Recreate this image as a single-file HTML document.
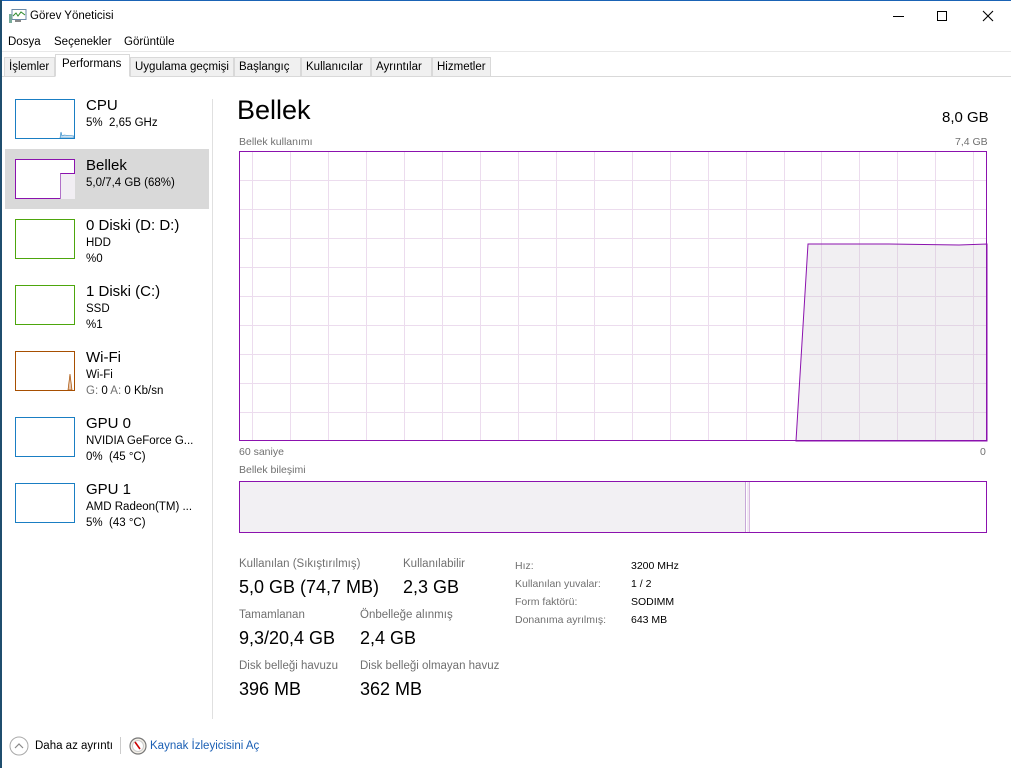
<!DOCTYPE html>
<html><head><meta charset="utf-8"><style>
*{margin:0;padding:0;box-sizing:border-box}
body{width:1011px;height:768px;background:#fff;font-family:"Segoe UI","Liberation Sans","DejaVu Sans",sans-serif;position:relative;overflow:hidden;color:#000}
.a{position:absolute;white-space:nowrap}
.s12{font-size:11.5px}
.g{color:#707070}
.tab{position:absolute;top:57px;height:20px;background:#f0f0f0;border:1px solid #d9d9d9;font-size:11.5px;padding:3px 0 0 4px;white-space:nowrap;overflow:hidden}
.thumb{position:absolute;left:15px;width:60px;height:40px;border:1px solid;background:#fff}
.t1{position:absolute;left:86px;font-size:15px;white-space:nowrap}
.t2{position:absolute;left:86px;font-size:11.5px;white-space:nowrap}
</style></head><body>
<div class="a" style="left:0;top:0;width:1011px;height:1px;background:#1a63b5"></div>
<div class="a" style="left:0;top:0;width:2px;height:768px;background:#1f4e6e"></div>
<svg class="a" style="left:9px;top:9px" width="18" height="14" viewBox="0 0 18 14"><rect x="3" y="0.5" width="14" height="10" fill="#fff" stroke="#6a8aa8"/><polyline points="4,7 7,4 9,7 12,3 16,6" fill="none" stroke="#2d8a2d"/><rect x="0" y="5" width="3" height="9" fill="#7a9"/><rect x="6" y="11" width="6" height="2" fill="#888"/></svg>
<div class="a s12" style="left:30px;top:10px">Görev Yöneticisi</div>
<div class="a" style="left:893px;top:16px;width:11px;height:1px;background:#000"></div>
<div class="a" style="left:937px;top:11px;width:10px;height:10px;border:1px solid #000"></div>
<svg class="a" style="left:982px;top:10px" width="12" height="12"><path d="M1 1L11 11M11 1L1 11" stroke="#000" stroke-width="1.1"/></svg>
<div class="a s12" style="left:8px;top:36px">Dosya</div>
<div class="a s12" style="left:54px;top:36px">Seçenekler</div>
<div class="a s12" style="left:124px;top:36px">Görüntüle</div>
<div class="a" style="left:2px;top:51px;width:1009px;height:1px;background:#e8e8e8"></div>
<div class="a" style="left:2px;top:76px;width:1009px;height:1px;background:#d9d9d9"></div>
<div class="tab" style="left:4px;width:51px">İşlemler</div>
<div class="tab" style="left:55px;top:54px;height:23px;width:75px;background:#fff;border-bottom-color:#fff;padding:3px 0 0 6px">Performans</div>
<div class="tab" style="left:130px;width:104px">Uygulama geçmişi</div>
<div class="tab" style="left:234px;width:67px">Başlangıç</div>
<div class="tab" style="left:301px;width:70px">Kullanıcılar</div>
<div class="tab" style="left:371px;width:61px">Ayrıntılar</div>
<div class="tab" style="left:432px;width:59px">Hizmetler</div>
<div class="a" style="left:212px;top:99px;width:1px;height:620px;background:#e0e0e0"></div>
<div class="a" style="left:5px;top:149px;width:204px;height:60px;background:#d9d9d9"></div>
<div class="thumb" style="top:99px;border-color:#1a7ec3"><svg width="58" height="38" style="position:absolute;left:0;top:0"><path d="M44 38L45 32L46 36L48 35L58 36L58 38Z" fill="#cfe3f2" stroke="#1a7ec3" stroke-width="0.6"/></svg></div>
<div class="t1" style="top:97px">CPU</div><div class="t2" style="top:117px">5%&nbsp; 2,65 GHz</div>
<div class="thumb" style="top:159px;border-color:#8b12ae"><div style="position:absolute;left:44px;top:13px;width:15px;height:26px;border-left:1px solid #b070c8;border-top:1px solid #8b12ae;background:#f1eef3"></div></div>
<div class="t1" style="top:157px">Bellek</div><div class="t2" style="top:177px">5,0/7,4 GB (68%)</div>
<div class="thumb" style="top:219px;border-color:#4da60c"></div>
<div class="t1" style="top:217px">0 Diski (D: D:)</div><div class="t2" style="top:237px">HDD</div><div class="t2" style="top:253px">%0</div>
<div class="thumb" style="top:285px;border-color:#4da60c"></div>
<div class="t1" style="top:283px">1 Diski (C:)</div><div class="t2" style="top:303px">SSD</div><div class="t2" style="top:319px">%1</div>
<div class="thumb" style="top:351px;border-color:#a74f01"><svg width="58" height="38" style="position:absolute;left:0;top:0"><path d="M52 38L54 22L56 38Z" fill="#e8c8b0" stroke="#a74f01" stroke-width="0.7"/></svg></div>
<div class="t1" style="top:349px">Wi-Fi</div><div class="t2" style="top:369px">Wi-Fi</div><div class="t2" style="top:385px"><span class="g">G:</span> 0 <span class="g">A:</span> 0 Kb/sn</div>
<div class="thumb" style="top:417px;border-color:#1a7ec3"></div>
<div class="t1" style="top:415px">GPU 0</div><div class="t2" style="top:435px">NVIDIA GeForce G...</div><div class="t2" style="top:451px">0%&nbsp; (45 °C)</div>
<div class="thumb" style="top:483px;border-color:#1a7ec3"></div>
<div class="t1" style="top:481px">GPU 1</div><div class="t2" style="top:501px">AMD Radeon(TM) ...</div><div class="t2" style="top:517px">5%&nbsp; (43 °C)</div>
<div class="a" style="left:237px;top:95px;font-size:27px">Bellek</div>
<div class="a" style="left:942px;top:109px;font-size:15px">8,0 GB</div>
<div class="a g" style="left:239px;top:136px;font-size:10.5px">Bellek kullanımı</div>
<div class="a g" style="left:955px;top:136px;font-size:10.5px">7,4 GB</div>
<svg class="a" style="left:239px;top:151px" width="749" height="291">
<g stroke="#ecdcee" stroke-width="1">
<path d="M0 29.5H748M0 58.5H748M0 87.5H748M0 116.5H748M0 145.5H748M0 174.5H748M0 203.5H748M0 232.5H748M0 261.5H748"/>
<path d="M13.5 0V290M51.5 0V290M89.5 0V290M127.5 0V290M165.5 0V290M203.5 0V290M241.5 0V290M279.5 0V290M317.5 0V290M355.5 0V290M393.5 0V290M431.5 0V290M469.5 0V290M507.5 0V290M545.5 0V290M582.5 0V290M620.5 0V290M658.5 0V290M696.5 0V290M734.5 0V290"/>
</g>
<path d="M557 290L569 93L650 93L720 94L748 93L748 290Z" fill="rgba(200,190,205,0.25)" stroke="#8b12ae" stroke-width="1"/>
<rect x="0.5" y="0.5" width="747" height="289" fill="none" stroke="#8b12ae"/>
</svg>
<div class="a g" style="left:239px;top:446px;font-size:10.5px">60 saniye</div>
<div class="a g" style="left:980px;top:446px;font-size:10.5px">0</div>
<div class="a g" style="left:239px;top:464px;font-size:10.5px">Bellek bileşimi</div>
<div class="a" style="left:239px;top:481px;width:748px;height:52px;border:1px solid #8b12ae;background:#fff">
<div style="position:absolute;left:0;top:0;width:506px;height:50px;background:#f2f0f3;border-right:1px solid #c8a8d8"></div>
<div style="position:absolute;left:507px;top:0;width:3px;height:50px;background:#f2eaf4;border-right:1px solid #d8b8e0"></div>
</div>
<div class="a g" style="left:239px;top:558px;font-size:11.5px">Kullanılan (Sıkıştırılmış)</div>
<div class="a" style="left:239px;top:577px;font-size:18px">5,0 GB (74,7 MB)</div>
<div class="a g" style="left:403px;top:558px;font-size:11.5px">Kullanılabilir</div>
<div class="a" style="left:403px;top:577px;font-size:18px">2,3 GB</div>
<div class="a g" style="left:239px;top:609px;font-size:11.5px">Tamamlanan</div>
<div class="a" style="left:239px;top:628px;font-size:18px">9,3/20,4 GB</div>
<div class="a g" style="left:360px;top:609px;font-size:11.5px">Önbelleğe alınmış</div>
<div class="a" style="left:360px;top:628px;font-size:18px">2,4 GB</div>
<div class="a g" style="left:239px;top:660px;font-size:11.5px">Disk belleği havuzu</div>
<div class="a" style="left:239px;top:679px;font-size:18px">396 MB</div>
<div class="a g" style="left:360px;top:660px;font-size:11.5px">Disk belleği olmayan havuz</div>
<div class="a" style="left:360px;top:679px;font-size:18px">362 MB</div>
<div class="a g" style="left:515px;top:557px;font-size:10.5px;line-height:18px">Hız:<br>Kullanılan yuvalar:<br>Form faktörü:<br>Donanıma ayrılmış:</div>
<div class="a" style="left:631px;top:557px;font-size:10.5px;line-height:18px">3200 MHz<br>1 / 2<br>SODIMM<br>643 MB</div>
<svg class="a" style="left:9px;top:736px" width="20" height="20"><circle cx="10" cy="10" r="9" fill="none" stroke="#aaa"/><path d="M6 12L10 8L14 12" fill="none" stroke="#888" stroke-width="1.2"/></svg>
<div class="a s12" style="left:35px;top:740px">Daha az ayrıntı</div>
<div class="a" style="left:120px;top:737px;width:1px;height:17px;background:#ccc"></div>
<svg class="a" style="left:129px;top:737px" width="18" height="18"><circle cx="9" cy="9" r="8" fill="#f4f0e8" stroke="#777" stroke-width="1.2"/><circle cx="9" cy="9" r="5.5" fill="#fff" stroke="#ccc"/><path d="M6 5L11 12" stroke="#c00" stroke-width="1.6"/></svg>
<div class="a s12" style="left:150px;top:740px;color:#1a5fb4">Kaynak İzleyicisini Aç</div>
</body></html>
